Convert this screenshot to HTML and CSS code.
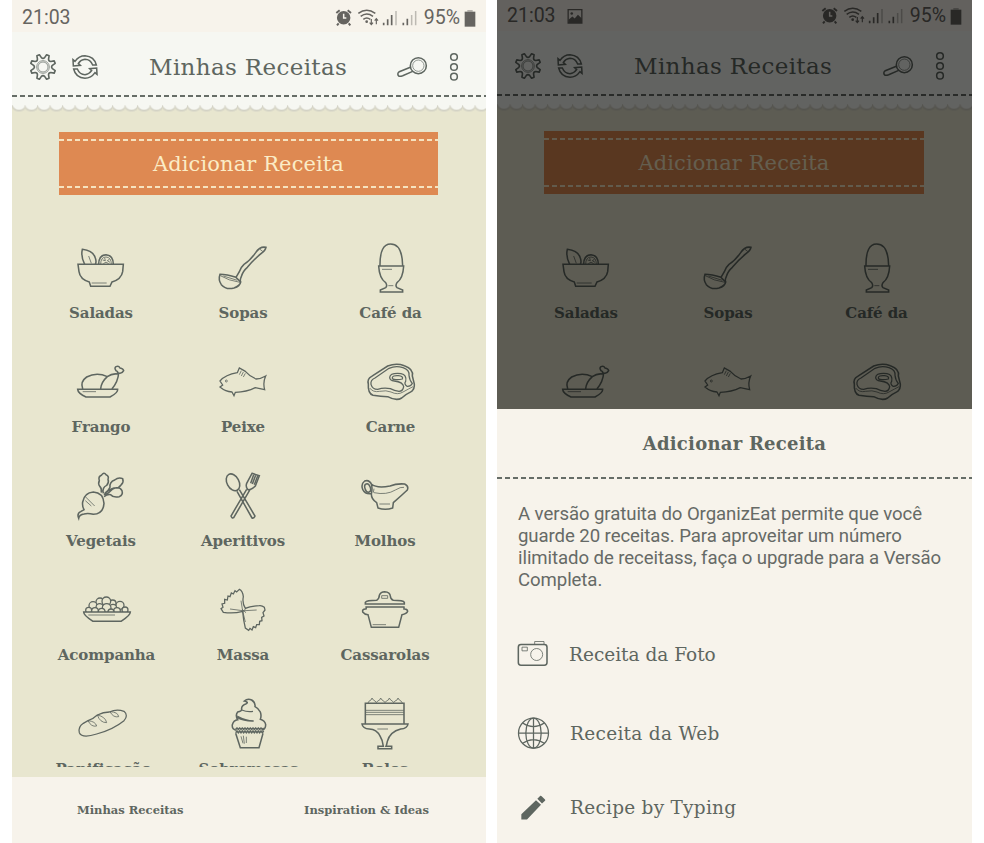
FILE: index.html
```html
<!DOCTYPE html>
<html lang="pt">
<head>
<meta charset="utf-8">
<title>Minhas Receitas</title>
<link rel="stylesheet" href="styles.css">
</head>
<body>
<svg class="defs" aria-hidden="true">
  <symbol id="status" viewBox="282 0 264 96">
    <g fill="none" stroke="currentColor" stroke-width="4.5">
      <circle cx="311" cy="50" r="18" fill="currentColor"/>
      <path d="M289 36L299 28M333 36L323 28M296 67L291 73M326 67L331 73" stroke-width="6"/>
      <path d="M311 38V51H319" class="cut"/>
      <path d="M355 37Q380 18 406 37M362 46Q380 32 399 46M370 55Q380 47 391 55"/>
      <path d="M394 54V70M389 65L394 71L399 65M409 70V54M404 59L409 53L414 59" stroke-width="3.5"/>
      <path d="M431 73V65M443 73V55M455 73V42" stroke-width="5"/><path d="M468 73V30" opacity=".4"/>
      <path d="M490 73V65M502 73V53" stroke-width="5"/><path d="M515 73V42M527 73V30" opacity=".4"/>
    </g>
    <circle cx="380" cy="62" r="4" fill="currentColor"/>
  </symbol>
  <symbol id="battery" viewBox="0 0 36 54">
    <path d="M2 8H34V53H2Z" fill="currentColor"/><path d="M10 3H26V8H10Z" fill="currentColor" opacity=".45"/>
  </symbol>
  <symbol id="gear" viewBox="-45 -45 90 90">
    <path transform="scale(1.06)" stroke-linejoin="round" d="M26.6 4.5L34.5 10.2L31.6 17.2L22 15.7Q16 16 15.7 22L17.2 31.6L10.2 34.5L4.5 26.6Q0 22 -4.5 26.6L-10.2 34.5L-17.2 31.6L-15.7 22Q-16 16 -22 15.7L-31.6 17.2L-34.5 10.2L-26.6 4.5Q-22 0 -26.6 -4.5L-34.5 -10.2L-31.6 -17.2L-22 -15.7Q-16 -16 -15.7 -22L-17.2 -31.6L-10.2 -34.5L-4.5 -26.6Q0 -22 4.5 -26.6L10.2 -34.5L17.2 -31.6L15.7 -22Q16 -16 22 -15.7L31.6 -17.2L34.5 -10.2L26.6 -4.5Q22 0 26.6 4.5Z"/>
    <circle r="19" stroke-width="2"/><circle r="15" stroke-width="2"/>
  </symbol>
  <symbol id="sync" viewBox="211 155 90 90">
    <path d="M220 178L226 183Q238 166 256 166Q284 168 290 194L279 194Q272 177 256 177Q244 178 236 189L242 195L221 197Z"/>
    <path d="M292 222L286 217Q274 234 256 234Q228 232 222 206L233 206Q240 223 256 223Q268 222 276 211L270 205L291 203Z"/>
  </symbol>
  <symbol id="search" viewBox="463 155 102 90">
    <circle cx="533" cy="196" r="24"/><circle cx="533" cy="196" r="17" stroke-width="2"/>
    <path d="M509 201L476 214Q468 220 474 227Q478 229 486 226L516 213"/>
  </symbol>
  <symbol id="dots" viewBox="623 152 36 96">
    <circle cx="641" cy="170" r="10"/><circle cx="641" cy="200" r="10"/><circle cx="641" cy="229" r="10"/>
  </symbol>

  <symbol id="salad" viewBox="63 24 180 180">
    <path d="M84 103H220L218 125Q214 148 186 156L180 169H122L118 156Q90 148 87 125Z"/>
    <path d="M104 103Q92 80 97 58Q130 62 136 84Q140 95 136 103M146 103Q146 75 168 74Q190 76 190 103"/>
    <path class="thin" d="M125 159H170M116 78L124 100M152 103Q152 81 168 81Q184 82 184 103M158 90L166 92L164 84M178 88L172 92L180 97M160 101Q168 92 176 101"/>
  </symbol>
  <symbol id="ladle" viewBox="489 24 180 180">
    <path d="M558 142L568 125Q572 112 582 103Q600 92 617 68Q630 48 648 52Q646 62 634 70Q610 90 592 112Q578 124 574 140Q569 150 572 156"/>
    <path d="M510 133Q504 150 514 164Q528 180 552 174Q570 168 572 156L558 142Q530 133 510 133Z"/>
    <path class="thin" d="M511 137Q535 152 570 157M520 138L562 151M630 58L638 64"/>
  </symbol>
  <symbol id="egg" viewBox="480 24 180 180">
    <path d="M537 108Q536 42 569 42Q604 42 605 108M533 108H608Q606 145 588 158Q582 168 588 173L605 180V186H538V180L554 173Q560 168 554 158Q535 145 533 108Z"/>
    <path class="thin" d="M543 118H573M562 167H577"/>
  </symbol>
  <symbol id="chicken" viewBox="63 366 180 180">
    <path d="M83 478H203Q204 488 180 501H108Q84 490 83 478ZM98 476Q90 455 110 441Q140 425 172 440M152 476Q154 456 172 440Q186 430 201 432Q206 424 198 422Q192 414 198 410Q206 406 210 414Q220 416 221 422Q216 432 206 429Q204 456 186 476"/>
    <path class="thin" d="M98 485H138"/>
  </symbol>
  <symbol id="fish" viewBox="489 366 180 180">
    <path class="mid" d="M510 453Q526 434 562 428L568 414L586 424Q600 440 618 447Q634 446 647 438Q638 458 644 479L616 473Q590 486 556 487L552 497L546 486Q525 484 514 474L510 471L518 465Z"/>
    <path class="thin" d="M574 422L568 434M580 426L574 438M586 430L580 441"/><circle class="thin" cx="529" cy="453" r="3"/>
  </symbol>
  <symbol id="steak" viewBox="480 366 180 180">
    <path d="M502 462Q498 446 512 439L560 408Q586 398 610 407Q638 416 634 438L640 462Q641 476 632 484Q615 492 602 504Q586 514 560 500Q540 500 516 496Q500 490 502 462Z"/>
    <path class="mid" d="M510 463Q508 450 522 444L564 415Q584 406 606 413Q626 420 624 436Q626 452 634 460Q630 470 618 469Q608 462 614 454Q618 434 600 431Q568 428 566 442Q566 452 580 453Q606 456 608 470Q606 484 594 484Q580 482 568 476Q548 472 530 478Q514 478 510 463Z"/>
    <path class="mid" d="M574 443Q574 436 592 437Q608 438 604 447Q592 450 580 448Q574 448 574 443"/>
    <path class="thin" d="M506 474Q516 488 536 484Q556 480 570 486Q590 496 606 486Q624 476 636 470"/>
  </symbol>
  <symbol id="beet" viewBox="63 18 180 180">
    <path d="M102 149Q96 138 98 126Q103 98 130 96Q160 98 162 130Q160 162 130 163Q114 159 102 162Q88 164 86 175Q80 160 92 155Z"/>
    <path d="M154 98Q156 86 150 80Q143 72 148 62Q144 50 154 46Q162 34 168 44Q178 48 174 58Q178 68 170 76Q156 82 160 100M164 100Q176 92 180 82Q178 66 194 60Q206 50 218 56Q222 66 214 74Q206 86 192 84Q176 88 162 104M164 106Q178 98 188 87Q208 78 216 92Q220 104 208 110Q190 114 182 104Q172 102 162 110"/>
    <path class="thin" d="M106 110L134 138M106 122L124 138"/>
  </symbol>
  <symbol id="cutlery" viewBox="489 18 180 180">
    <ellipse cx="549" cy="67" rx="18" ry="27" transform="rotate(-28 549 67)"/>
    <path d="M568 89L615 168Q612 176 606 174L561 94M590 88L543 168Q546 176 551 173L600 89M606 40L628 47L616 78Q604 90 594 89Q586 82 590 70Z"/>
    <path d="M611 44L602 70M617 46L607 72M623 48L613 74"/>
  </symbol>
  <symbol id="gravy" viewBox="435 18 180 180">
    <path d="M485 74Q478 58 464 63Q452 72 458 88Q466 104 484 101M484 72Q500 86 540 78Q560 70 584 72Q597 78 592 90Q575 106 550 128L548 144Q526 152 504 144L500 128Q484 118 484 102Q488 84 484 72"/>
    <ellipse cx="473" cy="84" rx="8" ry="13" transform="rotate(-20 473 84)"/>
    <path class="thin" d="M492 98Q530 106 556 90Q572 80 582 82M492 86L490 98M508 132H540"/>
  </symbol>
  <symbol id="peas" viewBox="78 360 180 180">
    <g class="pea mid"><circle cx="147" cy="426" r="12"/><circle cx="185" cy="430" r="10"/><circle cx="166" cy="424" r="13"/><circle cx="126" cy="437" r="12"/><circle cx="207" cy="436" r="12"/><circle cx="146" cy="442" r="11"/><circle cx="186" cy="444" r="11"/><circle cx="167" cy="444" r="13"/><circle cx="113" cy="451" r="9"/><circle cx="132" cy="453" r="10"/><circle cx="152" cy="455" r="10"/><circle cx="198" cy="453" r="10"/><circle cx="180" cy="456" r="9"/><circle cx="222" cy="450" r="9"/></g>
    <path class="pea" d="M98 456H238Q238 466 210 484H126Q98 466 98 456Z"/><path class="thin" d="M112 465H192"/>
  </symbol>
  <symbol id="pasta" viewBox="489 360 180 180">
    <path class="mid" d="M568 388L560 396L555 392L550 402L544 399L540 410L534 408L532 420L524 418L524 430L516 432L519 442L513 446L520 457Q550 462 578 454Q580 480 586 504L596 511L600 505L606 510L610 500L617 503L620 494L628 494L629 484L636 482L635 472L642 468L639 458L645 450L643 442Q636 436 628 437Q600 438 586 445Q576 430 580 410Q578 392 568 388Z"/>
    <path class="thin" d="M540 447Q580 456 620 450M573 422Q576 450 586 486M576 448L588 458M577 457L587 446"/>
  </symbol>
  <symbol id="pot" viewBox="435 360 180 180">
    <path d="M466 432V427Q470 421 500 421Q508 416 508 406Q512 395 524 395Q540 396 541 408Q542 419 550 421Q580 421 583 427V432ZM466 441H584M470 441L468 447Q456 446 458 456Q464 464 474 464L484 502H566L576 464Q590 462 593 454Q592 446 582 447V441"/>
    <path class="thin" d="M515 407H533V415H515ZM488 494H528"/>
  </symbol>
  <symbol id="bread" viewBox="63 42 180 180">
    <path class="mid" d="M88 158Q84 140 100 130L114 122Q128 118 142 105Q160 96 178 96Q200 86 222 94Q236 106 222 122Q190 148 140 162Q96 176 88 158Z"/>
    <path class="thin" d="M114 122Q136 124 140 138Q124 142 114 122M142 105Q166 110 170 128Q150 128 142 105M180 95Q204 96 206 110Q190 114 180 95"/>
  </symbol>
  <symbol id="cupcake" viewBox="504 42 180 180">
    <path d="M556 151Q542 148 544 134Q548 120 560 119Q552 106 560 96Q572 94 572 88Q570 76 586 71Q594 66 580 63Q590 54 602 60Q614 68 612 80Q624 86 628 96Q632 108 628 118Q642 122 644 134Q644 146 634 151M554 160L568 203H624L636 160"/>
    <path d="M554 148L558 144L562 148L566 144L570 148L574 144L578 148L582 144L586 148L590 144L594 148L598 144L602 148L606 144L610 148L614 144L618 148L622 144L626 148L630 144L634 148L638 144M554 158L558 153L562 158L566 153L570 158L574 153L578 158L582 153L586 158L590 153L594 158L598 153L602 158L606 153L610 158L614 153L618 158L622 153L626 158L630 153L634 158L638 153"/>
    <path class="mid" d="M572 90Q590 97 606 94M558 108Q584 122 608 123Q580 124 558 112"/>
    <path class="thin" d="M570 169L576 190M577 167L580 191M586 170V189"/>
  </symbol>
  <symbol id="cake" viewBox="435 42 180 180">
    <path d="M466 132V70H582V132M456 132H594Q592 146 572 147Q540 155 532 184Q530 195 528 199H545V206H504V199H520Q518 180 510 168Q500 148 478 147Q458 146 456 132Z"/>
    <path class="thin" d="M466 91H582M466 97H582M466 104H582M474 69Q476 62 483 60L486 54L490 60Q496 62 499 68Q502 62 509 60L512 54L516 60Q522 62 525 68Q528 62 535 60L538 54L542 60Q548 62 551 68Q554 62 561 60L564 54L568 60Q574 62 577 69M502 147H534"/>
  </symbol>
</svg>

<main class="screens">
  <section class="phone">
    <div class="status"><span>21:03</span><svg class="signals"><use href="#status"/></svg><span>95%</span><svg class="battery"><use href="#battery"/></svg></div>
    <header class="bar">
      <svg class="ico"><use href="#gear"/></svg><svg class="ico sync"><use href="#sync"/></svg>
      <h1>Minhas Receitas</h1>
      <svg class="ico search"><use href="#search"/></svg><svg class="ico dots"><use href="#dots"/></svg>
    </header>
    <div class="content">
      <button class="add">Adicionar Receita</button>
      <div class="grid">
        <div class="cell"><svg><use href="#salad"/></svg><span>Saladas</span></div>
        <div class="cell"><svg><use href="#ladle"/></svg><span>Sopas</span></div>
        <div class="cell nudge"><svg><use href="#egg"/></svg><span>Café da</span></div>
        <div class="cell"><svg><use href="#chicken"/></svg><span>Frango</span></div>
        <div class="cell"><svg><use href="#fish"/></svg><span>Peixe</span></div>
        <div class="cell nudge"><svg><use href="#steak"/></svg><span>Carne</span></div>
        <div class="cell"><svg><use href="#beet"/></svg><span>Vegetais</span></div>
        <div class="cell"><svg><use href="#cutlery"/></svg><span>Aperitivos</span></div>
        <div class="cell"><svg><use href="#gravy"/></svg><span>Molhos</span></div>
        <div class="cell nudge"><svg><use href="#peas"/></svg><span>Acompanha</span></div>
        <div class="cell"><svg><use href="#pasta"/></svg><span>Massa</span></div>
        <div class="cell"><svg><use href="#pot"/></svg><span>Cassarolas</span></div>
        <div class="cell"><svg><use href="#bread"/></svg><span class="wide">Panificação</span></div>
        <div class="cell nudge"><svg><use href="#cupcake"/></svg><span>Sobremesas</span></div>
        <div class="cell"><svg><use href="#cake"/></svg><span>Bolos</span></div>
      </div>
    </div>
    <nav class="tabs"><span>Minhas Receitas</span><span>Inspiration &amp; Ideas</span></nav>
  </section>

  <section class="phone second">
    <div class="dimmed">
      <div class="status"><span>21:03</span>
        <svg class="picture" viewBox="0 0 48 46"><path d="M3 2H45V43H3Z" fill="none" stroke="currentColor" stroke-width="4"/><path d="M4 33L16 23L23 29L33 18L45 29V43H4Z" fill="currentColor"/><circle cx="14" cy="14" r="4" fill="currentColor"/></svg>
        <svg class="signals"><use href="#status"/></svg><span>95%</span><svg class="battery"><use href="#battery"/></svg></div>
      <header class="bar">
        <svg class="ico"><use href="#gear"/></svg><svg class="ico sync"><use href="#sync"/></svg>
        <h1>Minhas Receitas</h1>
        <svg class="ico search"><use href="#search"/></svg><svg class="ico dots"><use href="#dots"/></svg>
      </header>
      <div class="content">
        <button class="add">Adicionar Receita</button>
        <div class="grid">
          <div class="cell"><svg><use href="#salad"/></svg><span>Saladas</span></div>
          <div class="cell"><svg><use href="#ladle"/></svg><span>Sopas</span></div>
          <div class="cell nudge"><svg><use href="#egg"/></svg><span>Café da</span></div>
          <div class="cell"><svg><use href="#chicken"/></svg></div>
          <div class="cell"><svg><use href="#fish"/></svg></div>
          <div class="cell nudge"><svg><use href="#steak"/></svg></div>
        </div>
      </div>
    </div>
    <div class="sheet">
      <h2>Adicionar Receita</h2>
      <p>A versão gratuita do OrganizEat permite que você<br>guarde 20 receitas. Para aproveitar um número<br>ilimitado de receitass, faça o upgrade para a Versão<br>Completa.</p>
      <ul class="options">
        <li><svg viewBox="81 60 99 90"><rect x="85" y="75" width="86" height="62" rx="8"/><path class="thin" d="M134 74V66H162V74M96 83H112V94H96Z"/><circle class="thin" cx="140" cy="105" r="18"/></svg><span>Receita da Foto</span></li>
        <li class="web"><svg viewBox="81 291 99 99"><g class="mid"><circle cx="130.500" cy="339.500" r="45"/><ellipse cx="130.500" cy="339.500" rx="23" ry="45"/><path d="M130.500 294V385M85 339.500H176M98 309Q130 331 163 309M98 370Q130 348 163 370"/></g></svg><span>Receita da Web</span></li>
        <li class="typing"><svg viewBox="81 516 99 90"><path class="solid" d="M94 581L138 539L153 553L111 597H94ZM142 535L151 526Q153 525 155 527L165 537Q167 539 165 541L156 549Z"/></svg><span>Recipe by Typing</span></li>
      </ul>
    </div>
  </section>
</main>
</body>
</html>
```
FILE: styles.css
```css
* { box-sizing: border-box; margin: 0; padding: 0; }
:root {
  --ink: #5e6660;
  --olive: #e8e6cf;
  --paper: #f7f3eb;
  --mint: #f6f7f2;
  --slab: "DejaVu Serif", serif;
}
body { background: #fff; color: var(--ink); font-family: var(--slab); }
.defs { position: absolute; width: 0; height: 0; }
svg { display: block; flex: none; fill: none; stroke: var(--ink); stroke-width: 4.600; }
.thin { stroke-width: 2.400; }
.mid { stroke-width: 3.800; }
.pea { fill: var(--olive); }
.cut { stroke: var(--paper); }
.solid { fill: var(--ink); stroke: none; }

.screens { display: flex; gap: 11px; padding-left: 12px; height: 843px; overflow: hidden; }
.phone { width: 474px; height: 843px; display: flex; flex-direction: column; background: var(--olive); }
.second { width: 475px; }

.status {
  height: 32px; display: flex; align-items: center; flex: none;
  padding: 3px 10px 0 10px; background: var(--paper); color: #666460;
  font: 19.5px/30px Roboto, sans-serif;
}
.status svg { stroke: none; }
.signals { width: 88px; height: 32px; margin: -2px 2px 0 auto; }
.battery { width: 12px; height: 18px; margin-left: 4px; }
.picture { width: 16px; height: 15px; margin-left: 11px; }

.bar {
  position: relative; height: 75px; flex: none; display: flex; align-items: center;
  padding: 0 26px 6px 16px;
  background:
    repeating-linear-gradient(90deg, #666d67 0 5px, transparent 5px 8px) 0 63px / 100% 2px no-repeat,
    var(--mint);
}
.bar::after {
  content: ""; position: absolute; left: 0; right: 0; top: 73px; height: 8px;
  background: radial-gradient(circle at 7px -2px, var(--mint) 0 6px, #d3d2c5 7.500px, transparent 9.500px) 0 0 / 12.500px 8px;
}
.bar h1 { margin: 1px 0 0 49px; font: 23px/30px var(--slab); letter-spacing: .35px; white-space: nowrap; }
.ico { width: 30px; height: 30px; }
.sync { margin-left: 12px; }
.search { width: 34px; margin-left: auto; }
.dots { width: 12px; height: 32px; margin-left: 19px; }

.content { height: 660px; overflow: hidden; padding-top: 25px; flex: none; }
.add {
  display: flex; align-items: center; justify-content: center;
  width: 379px; height: 63px; margin-left: 47px; border: 0; color: #fbecc6;
  font: 21px/30px var(--slab); letter-spacing: .1px;
  background:
    repeating-linear-gradient(90deg, #f6e3c0 0 5px, transparent 5px 8px) 0 7px / 100% 2px no-repeat,
    repeating-linear-gradient(90deg, #f6e3c0 0 5px, transparent 5px 8px) 0 54px / 100% 2px no-repeat,
    #de8952;
}
.grid { display: grid; grid-template-columns: repeat(3, 142px); grid-auto-rows: 114px; padding: 43px 0 0 18px; }
.cell { display: flex; flex-direction: column; align-items: center; }
.cell svg { width: 60px; height: 60px; }
.cell span { margin-top: 5px; font: bold 15px/20px var(--slab); letter-spacing: -.1px; white-space: nowrap; }
.nudge { padding-left: 11px; }
.cell .wide { padding-left: 5px; }

.tabs {
  display: flex; justify-content: space-between; align-items: center;
  margin-top: auto; height: 66px; padding: 0 57px 0 65px; background: var(--paper);
  font: bold 11.500px/16px var(--slab);
}

.dimmed { position: relative; height: 409px; overflow: hidden; flex: none; }
.dimmed::after { content: ""; position: absolute; inset: 0; background: rgba(0, 0, 0, .6); }
.dimmed .status { height: 31px; padding-top: 1px; }
.dimmed .add { width: 380px; }
.dimmed .grid { padding: 44px 0 0 18px; }
.dimmed .nudge { padding-left: 13px; }

.sheet { flex: 1; background: var(--paper); }
.sheet h2 {
  height: 70px; padding-top: 21px; text-align: center; font: bold 18px/28px var(--slab); letter-spacing: .25px;
  background: repeating-linear-gradient(90deg, #666d67 0 5px, transparent 5px 8px) 0 68px / 100% 2px no-repeat;
}
.sheet p { padding: 25px 0 0 21px; font: 18.600px/21.900px Roboto, sans-serif; letter-spacing: -.080px; white-space: nowrap; color: #666a66; }
.options { list-style: none; padding-left: 20px; margin-top: 46px; }
.options li { display: flex; align-items: center; height: 33px; margin-bottom: 46px; font-size: 18.500px; white-space: nowrap; }
.options svg { width: 33px; height: 33px; }
.options span { margin-left: 19px; }
.options .web { margin-bottom: 41px; letter-spacing: .3px; }
.options .typing { letter-spacing: .25px; }
.options .web span, .options .typing span { margin-left: 20px; }
```
